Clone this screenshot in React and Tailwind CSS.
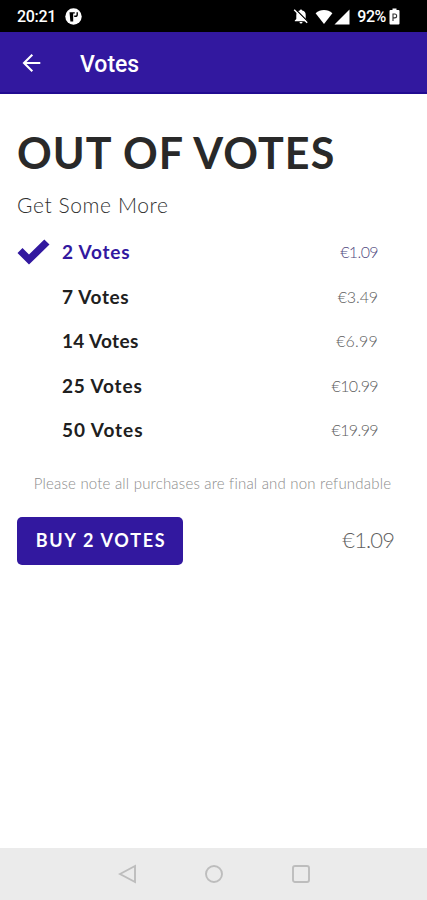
import React, { useState } from 'react';

const options = [
  { votes: 2, price: '€1.09', label: 'tracking-[0.8px]', cost: 'tracking-[-0.6px]' },
  { votes: 7, price: '€3.49', label: 'tracking-[0.65px]', cost: 'tracking-[-0.1px]' },
  { votes: 14, price: '€6.99', label: 'tracking-[0.35px]', cost: 'tracking-[0.2px]' },
  { votes: 25, price: '€10.99', label: 'tracking-[0.85px]', cost: 'tracking-[-0.6px]' },
  { votes: 50, price: '€19.99', label: 'tracking-[0.95px]', cost: 'tracking-[-0.6px]' },
];

const StatusBar = () => (
  <div className="h-8 shrink-0 bg-black text-white flex items-center justify-between pl-[17px] pr-[26px] font-['Roboto',sans-serif] font-medium text-[16px]">
    <div className="flex items-center gap-[9px] pt-px">
      <span className="tracking-[-0.3px]">20:21</span>
      <svg width="17" height="17" viewBox="0 0 17 17">
        <circle cx="8.5" cy="8.5" r="8.2" fill="#fff" />
        <path d="M4.5 4.2h3.7v9.3H5.4z" fill="#000" />
        <path d="M8 4.9h1.8M12.2 4.2v2.2q0 1.9-1.9 1.9H9.2" stroke="#000" strokeWidth="1.4" fill="none" />
      </svg>
    </div>
    <div className="flex items-center pt-px">
      <svg width="16" height="17" viewBox="0 0 16 17">
        <path d="M8 1.4a1.2 1.2 0 0 1 1.2 1.1A4.6 4.6 0 0 1 12.7 7v4l1.5 1.6v.7H1.8v-.7L3.3 11V7a4.6 4.6 0 0 1 3.5-4.5A1.2 1.2 0 0 1 8 1.4zM6.5 14h3a1.5 1.5 0 0 1-3 0z" fill="#fff" />
        <path d="M2.4 1.2l13 13" stroke="#000" strokeWidth="1.3" />
        <path d="M1.2 1.8l13 13" stroke="#fff" strokeWidth="1.4" />
      </svg>
      <svg className="ml-[6px]" width="18" height="16" viewBox="0 0 18 16">
        <path d="M9 15L.6 4.3Q4.3 1 9 1t8.4 3.3z" fill="#fff" />
      </svg>
      <svg className="ml-[1px]" width="16" height="16" viewBox="0 0 16 16">
        <path d="M15.5 .5v15H.5z" fill="#fff" />
      </svg>
      <span className="ml-[7px] tracking-[-0.4px]">92%</span>
      <svg className="ml-[3px] mr-px" width="11" height="17" viewBox="0 0 11 17">
        <path d="M3.5 .5h4V2H9.5q1 0 1 1v12.5q0 1-1 1h-8q-1 0-1-1V3q0-1 1-1h2z" fill="#fff" />
        <path d="M4 13V6h1.7a1.9 1.9 0 0 1 0 3.9H4" stroke="#333" strokeWidth="1.1" fill="none" />
      </svg>
    </div>
  </div>
);

const AppBar = () => (
  <header className="h-[62px] shrink-0 bg-[#32189f] border-b-2 border-[#210b91] text-white flex items-center pl-[22px]">
    <svg className="mt-[2px]" width="19" height="20" viewBox="0 0 19 20" fill="none" stroke="#fff" strokeWidth="2.1">
      <path d="M18.3 10H1.8M10.3 1.7L2 10l8.3 8.3" />
    </svg>
    <h1 className="ml-[39px] mt-[6px] font-['Roboto',sans-serif] font-medium text-[23px] leading-7">Votes</h1>
  </header>
);

const NavBar = () => (
  <nav className="h-[52px] shrink-0 bg-[#ebebeb] flex items-center pl-[118px] gap-[67px]">
    <svg width="20" height="20" viewBox="0 0 20 20" fill="none" stroke="#bdbdbd" strokeWidth="1.9">
      <path d="M2 10l15-8v16z" />
    </svg>
    <svg width="20" height="20" viewBox="0 0 20 20" fill="none" stroke="#bdbdbd" strokeWidth="1.9">
      <circle cx="9" cy="10" r="8" />
    </svg>
    <svg width="20" height="20" viewBox="0 0 20 20" fill="none" stroke="#bdbdbd" strokeWidth="1.9">
      <rect x="1" y="2" width="16" height="16" rx="2" />
    </svg>
  </nav>
);

const App = () => {
  const [selected, setSelected] = useState(0);
  const current = options[selected];

  return (
    <div className="h-[900px] w-[427px] bg-white flex flex-col overflow-hidden font-['Lato',sans-serif]">
      <StatusBar />
      <AppBar />
      <main className="flex-1 px-[17px] pt-8">
        <h2 className="text-[43px] leading-[54px] font-bold text-[#292929] whitespace-nowrap tracking-[1.1px]">OUT OF VOTES</h2>
        <p className="mt-[12px] text-[21px] leading-[26px] font-light text-[#303030] tracking-[0.6px]">Get Some More</p>
        <div className="mt-[12px]">
          {options.map((o, i) => (
            <div key={o.votes} onClick={() => setSelected(i)} className="h-[44.5px] flex items-center pr-[32px] cursor-pointer">
              <div className="w-[45px]">
                {i === selected && (
                  <svg width="33" height="26" viewBox="0 0 33 26">
                    <path d="M0.5 14l5-5 6.5 6.6L27.3.5l5.2 5.1L12 25.5z" fill="#32189f" />
                  </svg>
                )}
              </div>
              <span className={`flex-1 text-[19px] font-bold ${o.label} ${i === selected ? 'text-[#32189f]' : 'text-[#202020]'}`}>{o.votes} Votes</span>
              <span className={`text-[16px] font-light ${o.cost} ${i === selected ? 'text-[#514a80]' : 'text-[#606060]'}`}>{o.price}</span>
            </div>
          ))}
        </div>
        <p className="mt-[20.5px] pr-[2px] text-[15px] leading-5 font-light text-center text-[#8c8c8c] whitespace-nowrap tracking-[0.2px]">Please note all purchases are final and non refundable</p>
        <div className="mt-[24px] flex items-center justify-between pr-[16px]">
          <button className="w-[166px] h-12 pl-[2px] pb-px rounded-[5px] bg-[#32189f] text-white text-[18px] font-bold tracking-[1.7px] whitespace-nowrap">BUY {current.votes} VOTES</button>
          <span className="text-[22px] font-light text-[#606060] tracking-[-0.9px] -mt-[3px]">{current.price}</span>
        </div>
      </main>
      <NavBar />
    </div>
  );
};

export default App;
